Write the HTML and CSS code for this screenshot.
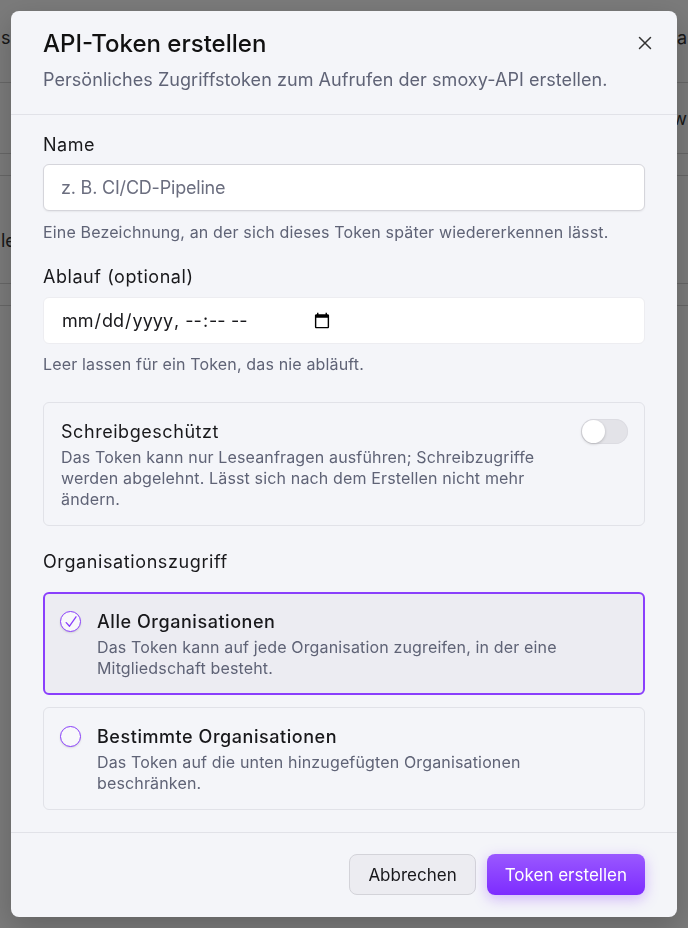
FILE: index.html
```html
<!DOCTYPE html>
<html lang="de">
<head>
	<meta charset="utf-8">
	<link rel="stylesheet" href="styles.css">
	<title>API-Token erstellen</title>
</head>
<body>
	<div class="page">
		<div class="page-row first"><span>sm</span><span>a</span></div>
		<div class="page-row second"><span></span><span>w</span></div>
		<div class="page-row thin"></div>
		<div class="page-row fourth"><span>le</span></div>
		<div class="page-row thin"></div>
	</div>

	<div class="overlay">
		<div class="modal">
			<div class="modal-header">
				<h2>API-Token erstellen</h2>
				<p>Persönliches Zugriffstoken zum Aufrufen der smoxy-API erstellen.</p>
				<button class="close" aria-label="Schließen">
					<svg width="16" height="16" viewBox="0 0 16 16" fill="none" stroke="currentColor" stroke-width="1.5" stroke-linecap="round"><path d="M2.5 2.5l11 11M13.5 2.5l-11 11"/></svg>
				</button>
			</div>

			<div class="modal-body">
				<div class="field">
					<label for="name">Name</label>
					<input type="text" id="name" class="input" placeholder="z. B. CI/CD-Pipeline">
					<p class="help">Eine Bezeichnung, an der sich dieses Token später wiedererkennen lässt.</p>
				</div>

				<div class="field">
					<label for="expires">Ablauf (optional)</label>
					<input type="datetime-local" id="expires" class="input date">
					<p class="help">Leer lassen für ein Token, das nie abläuft.</p>
				</div>

				<div class="switch-card">
					<div class="switch-text">
						<div class="card-title">Schreibgeschützt</div>
						<p class="card-desc">Das Token kann nur Leseanfragen ausführen; Schreibzugriffe werden abgelehnt. Lässt sich nach dem Erstellen nicht mehr ändern.</p>
					</div>
					<span class="switch"><span class="knob"></span></span>
				</div>

				<div class="group-label">Organisationszugriff</div>

				<div class="option selected">
					<span class="radio">
						<svg width="14" height="14" viewBox="0 0 14 14" fill="none" stroke="currentColor" stroke-width="1.3" stroke-linecap="round" stroke-linejoin="round"><path d="M2.2 7.6l3.3 3.6L12 1.8"/></svg>
					</span>
					<div>
						<div class="card-title">Alle Organisationen</div>
						<p class="card-desc">Das Token kann auf jede Organisation zugreifen, in der eine Mitgliedschaft besteht.</p>
					</div>
				</div>

				<div class="option">
					<span class="radio"></span>
					<div>
						<div class="card-title">Bestimmte Organisationen</div>
						<p class="card-desc">Das Token auf die unten hinzugefügten Organisationen beschränken.</p>
					</div>
				</div>
			</div>

			<div class="modal-footer">
				<button class="btn btn-secondary">Abbrechen</button>
				<button class="btn btn-primary">Token erstellen</button>
			</div>
		</div>
	</div>
</body>
</html>
```

FILE: styles.css
```css
* {
	box-sizing: border-box;
}
body {
	margin: 0;
	font-family: Inter, "Noto Sans", sans-serif;
	color: #18181b;
	background: #fff;
}

/* page behind the dialog */
.page-row {
	display: flex;
	justify-content: space-between;
	align-items: center;
	padding: 0 1px;
	border-bottom: 1px solid #d6d6d6;
	font-size: 18px;
	color: #333;
}
.page-row.first {
	height: 83px;
	padding-bottom: 8px;
}
.page-row.second {
	height: 71px;
}
.page-row.thin {
	height: 22px;
}
.page-row.fourth {
	height: 108px;
	padding-top: 22px;
}

.overlay {
	position: fixed;
	inset: 0;
	background: rgba(0, 0, 0, 0.52);
	display: flex;
	align-items: center;
	justify-content: center;
	padding: 11px;
}
.modal {
	width: 100%;
	height: 100%;
	background: #f4f5f9;
	border-radius: 8px;
	box-shadow: 0 10px 30px rgba(0, 0, 0, 0.2);
	display: flex;
	flex-direction: column;
}

.modal-header {
	position: relative;
	padding: 17px 32px 21px;
	border-bottom: 1px solid #e1e2e8;
}
.modal-header h2 {
	margin: 0;
	font-size: 24px;
	line-height: 32px;
	font-weight: 500;
	color: #111;
}
.modal-header p {
	margin: 6px 0 0;
	font-size: 18px;
	line-height: 27px;
	letter-spacing: 0.05px;
	color: #5f6376;
}
.close {
	position: absolute;
	top: 24px;
	right: 24px;
	border: 0;
	background: none;
	padding: 0;
	color: #333;
	cursor: pointer;
}
.close svg {
	display: block;
}

.modal-body {
	flex: 1;
	padding: 16px 32px 22px;
}
.field {
	margin-bottom: 19px;
}
.field label {
	display: block;
	font-size: 18px;
	line-height: 27px;
	letter-spacing: 0.55px;
	color: #18181b;
}
.input {
	display: flex;
	width: 100%;
	height: 47px;
	margin-top: 6px;
	padding: 0 17px;
	border: 1px solid #d5d5db;
	border-radius: 6px;
	background: #fff;
	font-family: inherit;
	font-size: 18px;
	letter-spacing: -0.2px;
	color: #18181b;
	box-shadow: 0 1px 2px rgba(0, 0, 0, 0.06);
}
.input::placeholder {
	color: #6b6e7f;
}
.input.date {
	margin-top: 7px;
	letter-spacing: 0;
	border-color: #ededf1;
	box-shadow: none;
}
.input.date::-webkit-calendar-picker-indicator {
	margin-left: 19px;
}
.help {
	margin: 9px 0 0;
	font-size: 16px;
	line-height: 24px;
	letter-spacing: 0.15px;
	color: #5f6376;
}
.field + .field .help {
	margin-top: 8px;
}

.switch-card {
	display: flex;
	justify-content: space-between;
	align-items: flex-start;
	margin-top: 26px;
	padding: 15px 16px 15px 17px;
	border: 1px solid #e1e2e8;
	border-radius: 6px;
}
.switch-text {
	max-width: 490px;
}
.card-title {
	font-size: 18px;
	line-height: 27px;
	letter-spacing: 0.55px;
	color: #18181b;
}
.card-desc {
	margin: 2px 0 0;
	font-size: 16px;
	line-height: 21px;
	letter-spacing: 0.15px;
	color: #5f6376;
}
.switch {
	flex: none;
	position: relative;
	width: 47px;
	height: 25px;
	margin-top: 1px;
	border-radius: 13px;
	background: #e3e3e8;
	box-shadow: inset 0 0 0 1px #dcdce2;
}
.knob {
	position: absolute;
	top: 1px;
	left: 1px;
	width: 23px;
	height: 23px;
	border-radius: 50%;
	background: #fff;
	box-shadow: 0 1px 3px rgba(0, 0, 0, 0.2);
}

.group-label {
	margin-top: 22px;
	font-size: 18px;
	line-height: 27px;
	letter-spacing: 0.6px;
}

.option {
	display: flex;
	gap: 16px;
	margin-top: 17px;
	padding: 15px 16px;
	border: 1px solid #e1e2e8;
	border-radius: 6px;
}
.option + .option {
	margin-top: 12px;
}
.option.selected {
	border: 2px solid #8a3ffc;
	background: #ececf2;
	padding: 14px 15px;
}
.option .card-title {
	font-weight: 500;
}
.option .card-desc {
	max-width: 470px;
}
.radio {
	flex: none;
	display: flex;
	align-items: center;
	justify-content: center;
	width: 21px;
	height: 21px;
	margin-top: 3px;
	border: 1.5px solid #8a3ffc;
	border-radius: 50%;
	color: #8a3ffc;
	background: #f8f8fb;
	box-shadow: 0 1px 2px rgba(0, 0, 0, 0.12);
}

.modal-footer {
	display: flex;
	justify-content: flex-end;
	gap: 11px;
	padding: 21px 32px 22px;
	border-top: 1px solid #e1e2e8;
}
.btn {
	height: 41px;
	padding: 0 18px;
	border-radius: 8px;
	font-family: inherit;
	font-size: 17px;
	cursor: pointer;
}
.btn-secondary {
	border: 1px solid #d3d3d9;
	background: #ececf1;
	color: #18181b;
}
.btn-primary {
	border: 0;
	background: linear-gradient(#9a58ff, #7d2cff);
	color: #fff;
	box-shadow: 0 4px 14px rgba(138, 63, 252, 0.35);
}
```
